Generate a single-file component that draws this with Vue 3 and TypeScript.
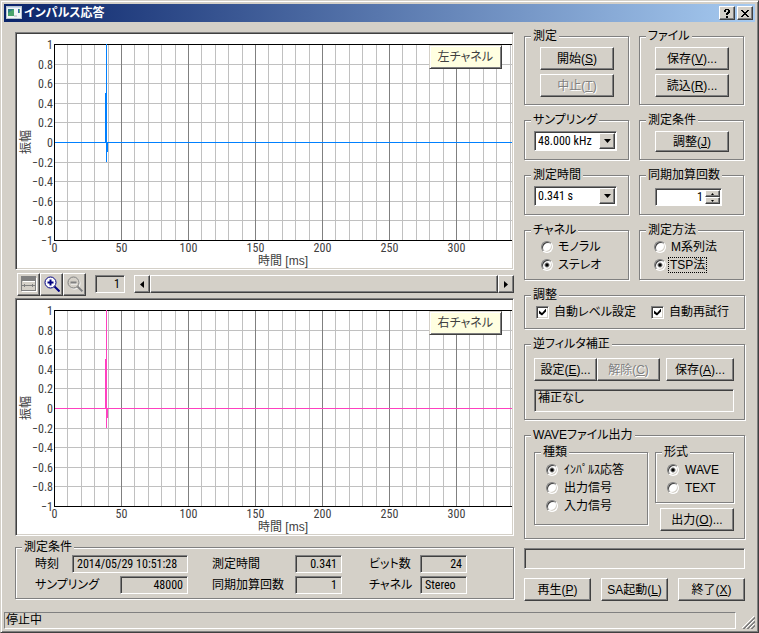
<script setup lang="ts">
import { ref } from 'vue'

interface Channel {
  id: string
  label: string
  color: string
}

const left: Channel = { id: 'left', label: '左チャネル', color: '#0080ff' }
const right: Channel = { id: 'right', label: '右チャネル', color: '#ff40c0' }
const charts: Channel[] = [left, right]

const plot = { left: 37, top: 10, height: 196, unit: 1.34 }

const xPos = (ms: number): number => plot.left + Math.round(ms * plot.unit) + 0.5
const yPos = (v: number): number => plot.top + Math.round(((1 - v) * plot.height) / 2) + 0.5

const xGrid = Array.from({ length: 34 }, (_, i) => (i + 1) * 10)
const xLabels = [0, 50, 100, 150, 200, 250, 300]
const yGrid = [0.8, 0.6, 0.4, 0.2, 0, -0.2, -0.4, -0.6, -0.8]
const yLabels = [1, ...yGrid, -1]
const formatY = (v: number): string => (v < 0 ? '−' + String(-v) : String(v))

const sampling = ref('48.000 kHz')
const duration = ref('0.341 s')
const count = ref(1)
const channelMode = ref('stereo')
const method = ref('tsp')
const autoLevel = ref(true)
const autoRetry = ref(true)
const kind = ref('impulse')
const format = ref('wave')
</script>

<template>
  <div class="window">
    <header class="titlebar">
      <svg class="app-icon" width="16" height="14" viewBox="0 0 16 14" aria-hidden="true">
        <rect x="0.5" y="0.5" width="15" height="12" fill="#f4f6f8" stroke="#b8c4d0" />
        <rect x="1" y="1" width="14" height="1" fill="#c8dcf0" />
        <rect x="2" y="3" width="6" height="7" fill="#2f7f86" />
        <path d="M2 10V7l3-2 3-2v7z" fill="#4ba46c" />
        <rect x="8" y="9" width="3" height="2" fill="#cfd4da" />
        <rect x="12" y="3" width="1" height="4" fill="#3566b0" />
        <rect x="13" y="3" width="1" height="4" fill="#58b070" />
      </svg>
      <h1 class="title">インパルス応答</h1>
      <button type="button" class="caption help" aria-label="ヘルプ">
        <svg width="8" height="9" viewBox="0 0 8 9" shape-rendering="crispEdges"><path d="M2 0h4v1h1v3H6v1H5v1H3V4h1V3h1V1H3v2H1V1h1zM3 7h2v2H3z" /></svg>
      </button>
      <button type="button" class="caption" aria-label="閉じる">
        <svg width="8" height="7" viewBox="0 0 8 7" shape-rendering="crispEdges"><path d="M0 0h2v1h1v1h2V1h1V0h2v1H7v1H6v1H5v1h1v1h1v1h1v1H6V6H5V5H3v1H2v1H0V6h1V5h1V4h1V3H2V2H1V1H0z" /></svg>
      </button>
    </header>

    <main class="content">
      <section class="graphs">
        <template v-for="(c, i) in charts" :key="c.id">
          <div class="chart">
            <svg class="plot" role="img" :aria-label="c.label">
              <g shape-rendering="crispEdges" fill="none">
                <line v-for="y in yGrid" :key="'y' + y" :x1="plot.left" x2="100%" :y1="yPos(y)" :y2="yPos(y)" stroke="#c0c0c0" />
                <line
                  v-for="x in xGrid" :key="'x' + x" :x1="xPos(x)" :x2="xPos(x)"
                  :y1="yPos(1)" :y2="yPos(-1)" :stroke="x % 50 === 0 ? '#808080' : '#c0c0c0'"
                />
                <line :x1="plot.left" x2="100%" :y1="yPos(1)" :y2="yPos(1)" stroke="#000" />
                <line :x1="plot.left" x2="100%" :y1="yPos(-1)" :y2="yPos(-1)" stroke="#000" />
                <line :x1="xPos(0)" :x2="xPos(0)" :y1="yPos(1)" :y2="yPos(-1)" stroke="#000" />
                <g :stroke="c.color">
                  <line :x1="plot.left + 1" x2="100%" :y1="yPos(0)" :y2="yPos(0)" />
                  <path d="M89.500 10V128M88.500 59V108M90.500 108V118" />
                </g>
              </g>
              <text v-for="y in yLabels" :key="'yl' + y" x="36" :y="yPos(y) + 4" text-anchor="end">{{ formatY(y) }}</text>
              <text v-for="x in xLabels" :key="'xl' + x" :x="xPos(x)" y="218" text-anchor="middle">{{ x }}</text>
              <text class="axis" x="266" y="231" text-anchor="middle">時間 [ms]</text>
              <text class="axis" transform="translate(13 108) rotate(-90)" text-anchor="middle">振幅</text>
            </svg>
            <span class="badge">{{ c.label }}</span>
          </div>

          <div v-if="i === 0" class="toolbar">
            <div class="tools">
              <button type="button" class="tool" aria-label="全体表示">
                <svg width="16" height="16" viewBox="0 0 16 16" shape-rendering="crispEdges">
                  <path d="M1 15.500h15M15.500 2v14M2 5.500h12" stroke="#fff" fill="none" />
                  <path d="M0 0h15v5H0z" fill="#808080" />
                  <path d="M0.500 4v10.500h14V4M1 9.500h13M3.500 8v3M2.500 9v1M11.500 8v3M12.500 9v1" fill="none" stroke="#808080" />
                </svg>
              </button>
              <button type="button" class="tool" aria-label="拡大">
                <svg width="16" height="16" viewBox="0 0 16 16">
                  <circle cx="6.500" cy="6.500" r="5.500" fill="#fff" stroke="#000080" />
                  <path d="M6.500 3.500v6M3.500 6.500h6" stroke="#000080" stroke-width="2" />
                  <path d="M10.500 10.500l5 5" stroke="#000080" stroke-width="2" />
                </svg>
              </button>
              <button type="button" class="tool" aria-label="縮小">
                <svg width="16" height="16" viewBox="0 0 16 16">
                  <path d="M11.500 11.500l4.500 4.500" stroke="#fff" stroke-width="2" />
                  <circle cx="7.500" cy="7.500" r="5.500" fill="none" stroke="#fff" />
                  <circle cx="6.500" cy="6.500" r="5.500" fill="#d4d0c8" stroke="#808080" />
                  <path d="M4 8h6" stroke="#fff" />
                  <path d="M3.500 6.500h6" stroke="#808080" stroke-width="2" />
                  <path d="M10.500 10.500l5 5" stroke="#808080" stroke-width="2" />
                </svg>
              </button>
            </div>
            <output class="field zoom" aria-label="倍率">1</output>
            <div class="scrollbar">
              <button type="button" class="arrow" aria-label="左へ">
                <svg width="4" height="7" viewBox="0 0 4 7"><path d="M4 0v7L0 3.500z" /></svg>
              </button>
              <div class="thumb"></div>
              <button type="button" class="arrow" aria-label="右へ">
                <svg width="4" height="7" viewBox="0 0 4 7"><path d="M0 0v7l4-3.500z" /></svg>
              </button>
            </div>
          </div>
        </template>

        <fieldset class="group info">
          <legend>測定条件</legend>
          <div class="info-block">
            <div class="pair"><span>時刻</span><output class="field time">2014/05/29 10:51:28</output></div>
            <div class="pair"><span>サンプリング</span><output class="field rate">48000</output></div>
          </div>
          <div class="info-block middle">
            <div class="pair"><span>測定時間</span><output class="field short">0.341</output></div>
            <div class="pair"><span>同期加算回数</span><output class="field short">1</output></div>
          </div>
          <div class="info-block last">
            <div class="pair"><span>ビット数</span><output class="field short">24</output></div>
            <div class="pair"><span>チャネル</span><output class="field short start">Stereo</output></div>
          </div>
        </fieldset>
      </section>

      <section class="panel">
        <div class="columns">
          <fieldset class="group actions">
            <legend>測定</legend>
            <button type="button" class="btn">開始(<u>S</u>)</button>
            <button type="button" class="btn" disabled>中止(<u>T</u>)</button>
          </fieldset>
          <fieldset class="group actions">
            <legend>ファイル</legend>
            <button type="button" class="btn">保存(<u>V</u>)...</button>
            <button type="button" class="btn">読込(<u>R</u>)...</button>
          </fieldset>

          <fieldset class="group choice">
            <legend>サンプリング</legend>
            <div class="combo">
              <select v-model="sampling" aria-label="サンプリング"><option>48.000 kHz</option></select>
              <span class="drop" aria-hidden="true"><svg width="7" height="4" viewBox="0 0 7 4"><path d="M0 0h7L3.500 4z" /></svg></span>
            </div>
          </fieldset>
          <fieldset class="group actions">
            <legend>測定条件</legend>
            <button type="button" class="btn low">調整(<u>J</u>)</button>
          </fieldset>

          <fieldset class="group choice">
            <legend>測定時間</legend>
            <div class="combo">
              <select v-model="duration" aria-label="測定時間"><option>0.341 s</option></select>
              <span class="drop" aria-hidden="true"><svg width="7" height="4" viewBox="0 0 7 4"><path d="M0 0h7L3.500 4z" /></svg></span>
            </div>
          </fieldset>
          <fieldset class="group spin-group">
            <legend>同期加算回数</legend>
            <div class="spin">
              <input v-model.number="count" type="number" min="1" aria-label="同期加算回数">
              <div class="steps">
                <button type="button" aria-label="増やす" @click="count++"><svg width="3" height="2" viewBox="0 0 3 2"><path d="M0 2h3L1.500 0z" /></svg></button>
                <button type="button" aria-label="減らす" @click="count = Math.max(1, count - 1)"><svg width="3" height="2" viewBox="0 0 3 2"><path d="M0 0h3L1.500 2z" /></svg></button>
              </div>
            </div>
          </fieldset>

          <fieldset class="group radios">
            <legend>チャネル</legend>
            <label><input v-model="channelMode" type="radio" name="channel" value="mono"><span>モノラル</span></label>
            <label><input v-model="channelMode" type="radio" name="channel" value="stereo"><span>ステレオ</span></label>
          </fieldset>
          <fieldset class="group radios near">
            <legend>測定方法</legend>
            <label><input v-model="method" type="radio" name="method" value="m"><span>M系列法</span></label>
            <label><input v-model="method" type="radio" name="method" value="tsp"><span class="focused">TSP法</span></label>
          </fieldset>
        </div>

        <fieldset class="group checks">
          <legend>調整</legend>
          <label><input v-model="autoLevel" type="checkbox"><span>自動レベル設定</span></label>
          <label><input v-model="autoRetry" type="checkbox"><span>自動再試行</span></label>
        </fieldset>

        <fieldset class="group filter">
          <legend>逆フィルタ補正</legend>
          <div class="filter-buttons">
            <div class="joined">
              <button type="button" class="btn">設定(<u>E</u>)...</button>
              <button type="button" class="btn" disabled>解除(<u>C</u>)</button>
            </div>
            <button type="button" class="btn save">保存(<u>A</u>)...</button>
          </div>
          <output class="field note">補正なし</output>
        </fieldset>

        <fieldset class="group wave">
          <legend>WAVEファイル出力</legend>
          <fieldset class="group radios inner kinds">
            <legend>種類</legend>
            <label><input v-model="kind" type="radio" name="kind" value="impulse"><span>ｲﾝﾊﾟﾙｽ応答</span></label>
            <label><input v-model="kind" type="radio" name="kind" value="output"><span>出力信号</span></label>
            <label><input v-model="kind" type="radio" name="kind" value="input"><span>入力信号</span></label>
          </fieldset>
          <div class="wave-side">
            <fieldset class="group radios inner formats">
              <legend>形式</legend>
              <label><input v-model="format" type="radio" name="format" value="wave"><span>WAVE</span></label>
              <label><input v-model="format" type="radio" name="format" value="text"><span>TEXT</span></label>
            </fieldset>
            <button type="button" class="btn export">出力(<u>O</u>)...</button>
          </div>
        </fieldset>

        <div class="field progress"></div>

        <div class="footer-buttons">
          <button type="button" class="btn">再生(<u>P</u>)</button>
          <button type="button" class="btn">SA起動(<u>L</u>)</button>
          <button type="button" class="btn">終了(<u>X</u>)</button>
        </div>
      </section>
    </main>

    <footer class="status">
      <span class="status-text">停止中</span>
      <svg class="grip" width="13" height="13" viewBox="0 0 13 13" aria-hidden="true">
        <path d="M0 12L12 0M4 12l8-8M8 12l4-4" stroke="#fff" />
        <path d="M1 13L13 1M2 13L13 2M5 13l8-8M6 13l7-7M9 13l4-4M10 13l3-3" stroke="#808080" />
      </svg>
    </footer>
  </div>
</template>

<style>
body {
  background: #d4d0c8;
}
</style>

<style scoped>
* {
  box-sizing: border-box;
}

.window {
  display: flex;
  flex-direction: column;
  min-height: 100vh;
  padding: 2px;
  background: #d4d0c8;
  border: 1px solid;
  border-color: #d4d0c8 #404040 #404040 #d4d0c8;
  box-shadow: inset 1px 1px 0 #fff, inset -1px -1px 0 #808080;
  color: #000;
  font-family: "Liberation Sans", "Noto Sans CJK JP", sans-serif;
  font-size: 12px;
  font-feature-settings: "palt";
  line-height: 12px;
}

button,
input,
select {
  margin: 0;
  padding: 0;
  font: inherit;
  color: inherit;
}

.titlebar {
  display: flex;
  align-items: center;
  gap: 2px;
  height: 18px;
  margin: 1px;
  padding: 0 2px;
  background: linear-gradient(to right, #0a246a, #a6caf0);
}

.title {
  flex: 1;
  margin: 0;
  color: #fff;
  font-size: 12px;
  font-weight: bold;
  line-height: 18px;
}

.btn,
.caption,
.tool,
.arrow,
.thumb,
.drop,
.steps button {
  display: flex;
  align-items: center;
  justify-content: center;
  background: #d4d0c8;
  border: 1px solid;
  border-color: #fff #404040 #404040 #fff;
  border-radius: 0;
  box-shadow: inset -1px -1px 0 #808080;
}

.caption {
  width: 16px;
  height: 14px;
}

.content {
  display: flex;
  flex: 1;
  align-items: flex-start;
  gap: 10px;
  padding: 7px 11px 8px 12px;
}

.graphs {
  flex: 1;
  min-width: 0;
  padding-top: 2px;
}

.chart,
.field,
.combo,
.spin {
  border: 1px solid;
  border-color: #808080 #fff #fff #808080;
  box-shadow: inset 1px 1px 0 #404040;
}

.chart {
  position: relative;
  padding: 1px;
  background: #fff;
  box-shadow: inset 1px 1px 0 #404040, inset -1px -1px 0 #d4d0c8;
}

.plot,
.field,
.combo select,
.spin input {
  font-family: "Roboto Condensed", "Liberation Sans", "Noto Sans CJK JP", sans-serif;
}

.plot {
  display: block;
  width: 100%;
  height: 234px;
  overflow: hidden;
  fill: #404040;
}

.axis {
  font-family: "Liberation Sans", "Noto Sans CJK JP", sans-serif;
}

.badge {
  position: absolute;
  top: 12px;
  right: 11px;
  padding: 5px 8px;
  background: #ffffe1;
  border: 1px solid;
  border-color: #d4d0c8 #404040 #404040 #d4d0c8;
  box-shadow: inset 1px 1px 0 #fff, inset -1px -1px 0 #808080;
  color: #404040;
  line-height: 12px;
}

.toolbar {
  display: flex;
  align-items: center;
  gap: 9px;
  height: 28px;
  padding-left: 2px;
}

.tools {
  display: flex;
}

.tool {
  width: 23px;
  height: 23px;
}

.scrollbar {
  display: flex;
  flex: 1;
  height: 18px;
}

.arrow {
  width: 16px;
}

.thumb {
  flex: 1;
}

.field {
  display: block;
  height: 18px;
  padding: 0 4px;
  line-height: 16px;
  text-align: right;
  white-space: nowrap;
}

.zoom {
  width: 30px;
}

.group {
  --start: 0px;
  min-width: 0;
  margin: 0;
  padding: 0;
  border: 1px solid #808080;
  box-shadow: 1px 1px 0 #fff, inset 1px 1px 0 #fff;
}

.group > legend {
  height: 12px;
  margin-left: calc(6px - var(--start));
  padding: 0 2px;
  background: #d4d0c8;
  line-height: 12px;
  white-space: nowrap;
}

.info {
  --start: 19px;
  display: flex;
  gap: 24px;
  margin-top: 5px;
  padding: 2px 19px 4px var(--start);
}

.info-block {
  display: grid;
  gap: 3px;
  width: 153px;
}

.middle {
  width: 130px;
}

.last {
  width: 98px;
  margin-left: 3px;
}

.pair {
  display: flex;
  align-items: center;
  justify-content: space-between;
  white-space: nowrap;
}

.time {
  width: 116px;
  text-align: left;
}

.rate {
  width: 68px;
}

.short {
  width: 47px;
}

.start {
  text-align: left;
}

.panel {
  display: grid;
  flex: 0 0 221px;
  gap: 9px;
}

.columns {
  display: grid;
  grid-template-columns: 1fr 1fr;
  gap: 9px 10px;
  padding-right: 1px;
}

.btn {
  display: block;
  height: 23px;
  line-height: 20px;
  text-align: center;
  white-space: nowrap;
}

.btn:disabled {
  color: #808080;
  text-shadow: 1px 1px 0 #fff;
}

.actions {
  --start: 15px;
  padding: 5px 14px 7px var(--start);
}

.actions .btn {
  width: 100%;
}

.actions .btn + .btn {
  margin-top: 4px;
}

.actions .low {
  height: 21px;
  line-height: 18px;
}

.choice {
  --start: 9px;
  padding: 5px 11px 8px var(--start);
}

.combo {
  position: relative;
  height: 20px;
  padding: 1px;
  background: #fff;
}

.combo select {
  display: block;
  width: 100%;
  height: 16px;
  padding: 0 18px 0 2px;
  appearance: none;
  background: transparent;
  border: 0;
  border-radius: 0;
  outline: 0;
  line-height: 16px;
}

.drop {
  position: absolute;
  top: 1px;
  right: 1px;
  width: 16px;
  height: 16px;
  pointer-events: none;
}

.spin-group {
  --start: 15px;
  padding: 7px 21px 8px var(--start);
}

.spin {
  display: flex;
  height: 18px;
  padding: 1px;
  background: #fff;
}

.spin input {
  flex: 1;
  width: 0;
  padding-right: 2px;
  appearance: textfield;
  background: transparent;
  border: 0;
  outline: 0;
  text-align: right;
}

.spin input::-webkit-inner-spin-button {
  display: none;
}

.steps {
  display: grid;
  grid-template-rows: 1fr 1fr;
  width: 15px;
}

.steps button {
  min-height: 0;
}

.radios {
  --start: 16px;
  padding: 2px 8px 5px var(--start);
}

.near {
  --start: 14px;
}

.radios label,
.checks label {
  display: flex;
  align-items: center;
  gap: 5px;
  height: 18px;
  white-space: nowrap;
}

.radios input {
  width: 12px;
  height: 12px;
  appearance: none;
  background: #fff;
  border: 1px solid;
  border-color: #808080 #fff #fff #808080;
  border-radius: 50%;
  box-shadow: inset 1px 1px 0 #404040, inset -1px -1px 0 #d4d0c8;
  outline: 0;
}

.radios input:checked {
  background: radial-gradient(circle, #000 0 1px, #fff 3px);
}

.focused {
  margin-left: -1px;
  outline: 1px dotted #000;
  outline-offset: 1px;
}

.checks {
  --start: 11px;
  display: flex;
  gap: 15px;
  padding: 2px 8px 7px var(--start);
}

.checks input {
  width: 13px;
  height: 13px;
  appearance: none;
  background: #fff;
  border: 1px solid;
  border-color: #808080 #fff #fff #808080;
  box-shadow: inset 1px 1px 0 #404040, inset -1px -1px 0 #d4d0c8;
}

.checks input:checked::before {
  content: "";
  display: block;
  width: 7px;
  height: 7px;
  margin: 2px;
  background: #000;
  clip-path: polygon(0 29%, 43% 65%, 100% 0, 100% 43%, 43% 100%, 0 71%);
}

.filter {
  --start: 9px;
  padding: 8px 10px 7px var(--start);
}

.filter-buttons {
  display: flex;
  gap: 6px;
  margin-bottom: 8px;
}

.joined {
  display: grid;
  flex: 1;
  grid-template-columns: 1fr 1fr;
}

.save {
  width: 68px;
}

.note {
  height: 23px;
  padding: 0 3px;
  text-align: left;
}

.wave {
  --start: 9px;
  display: flex;
  gap: 7px;
  padding: 5px 10px 7px var(--start);
}

.inner {
  --start: 11px;
  padding: 3px 8px 5px var(--start);
}

.kinds {
  flex: 1;
  align-self: flex-start;
  padding-bottom: 9px;
}

.kinds label,
.formats label {
  gap: 6px;
}

.wave-side {
  display: grid;
  gap: 5px;
  width: 79px;
}

.export {
  justify-self: end;
  width: 74px;
}

.progress {
  height: 21px;
}

.footer-buttons {
  display: grid;
  grid-template-columns: repeat(3, 1fr);
  gap: 10px;
}

.status {
  display: flex;
  align-items: flex-end;
  justify-content: space-between;
  gap: 6px;
  padding: 0 1px 1px;
}

.status-text {
  flex: 1;
  height: 17px;
  padding-left: 1px;
  border: 1px solid;
  border-color: #808080 #fff #fff #808080;
  line-height: 14px;
}
</style>
